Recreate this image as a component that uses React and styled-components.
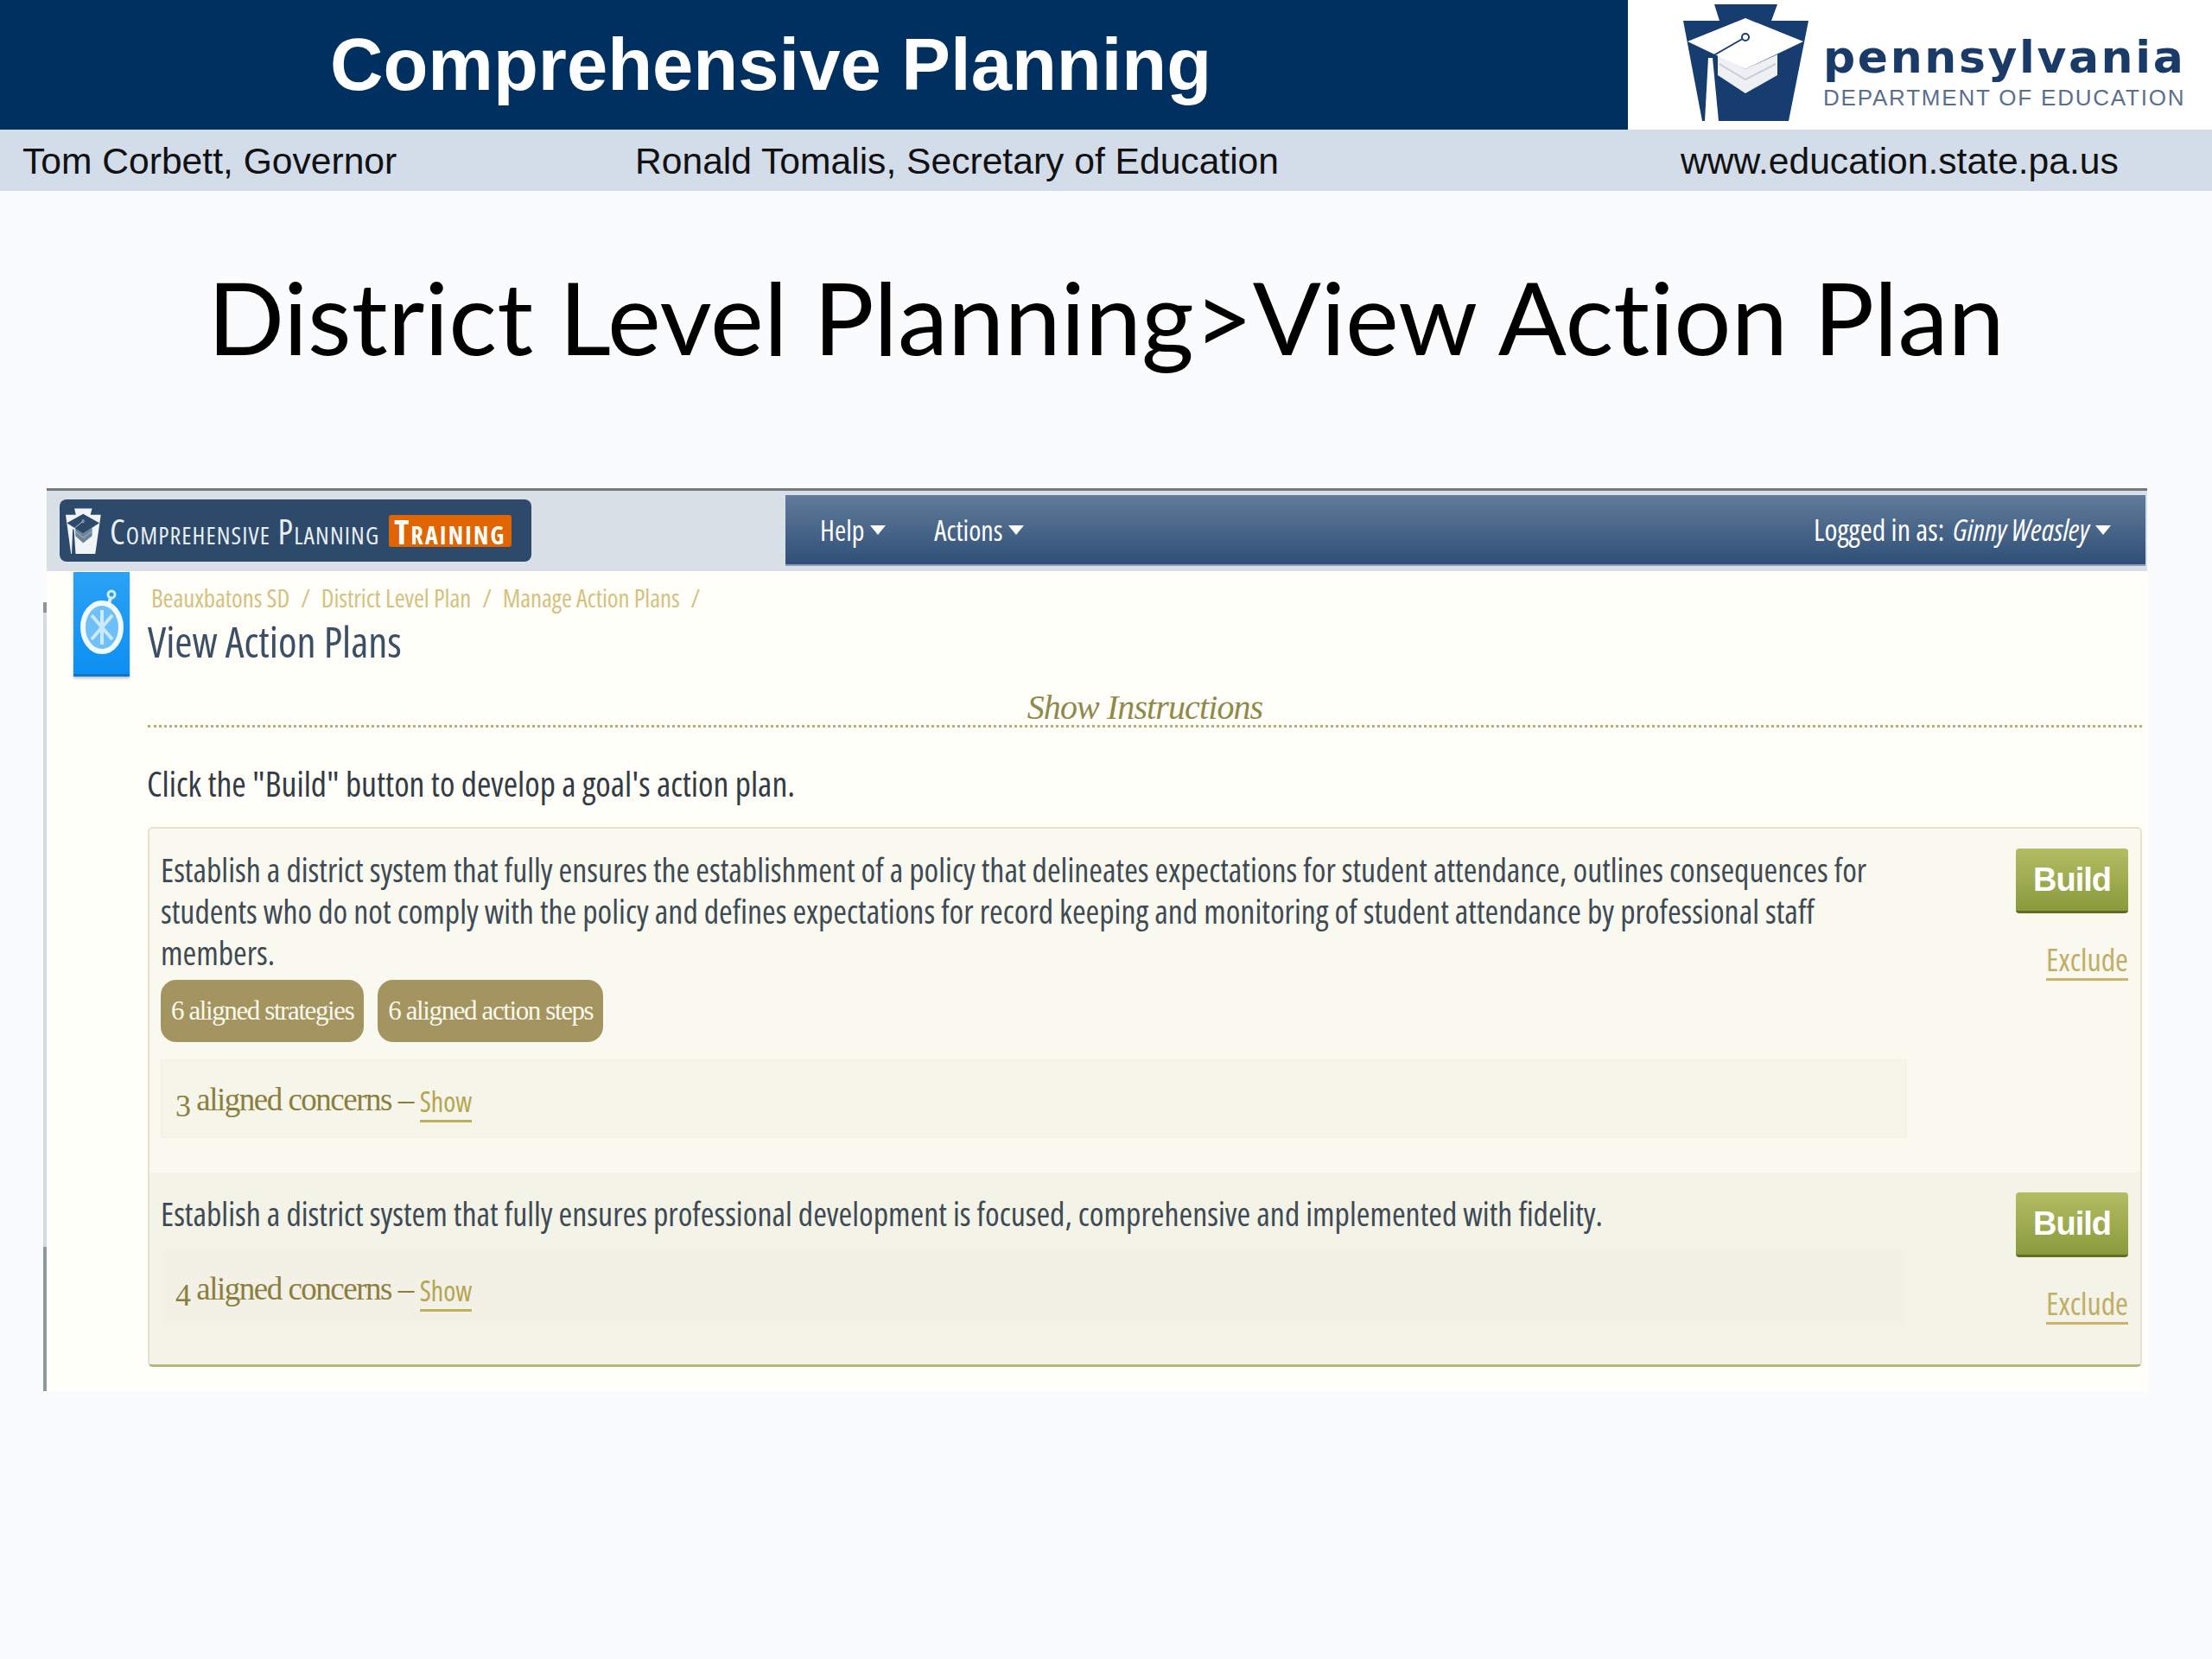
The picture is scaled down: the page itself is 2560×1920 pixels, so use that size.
import styled, { createGlobalStyle } from "styled-components";

const GlobalStyle = createGlobalStyle`
  html, body {
    margin: 0;
    padding: 0;
    background: #fafbfd;
  }
  * {
    box-sizing: border-box;
  }
`;

const condensed = `"Open Sans", "Liberation Sans", sans-serif`;
const bookSerif = `"Liberation Serif", "DejaVu Serif", serif`;

const Page = styled.div`
  width: 2560px;
  height: 1920px;
  overflow: hidden;
  background: #fafbfd;
`;

const Banner = styled.header`
  display: flex;
  height: 150px;
`;

const BannerTitle = styled.div`
  flex: none;
  width: 1884px;
  padding-left: 382px;
  display: flex;
  align-items: center;
  background: #00305f;
  color: #fff;
  font: bold 85px "Liberation Sans", Arial, sans-serif;
`;

const LogoArea = styled.div`
  flex: 1;
  display: flex;
  gap: 16px;
  padding: 4px 0 0 64px;
  background: #fff;
`;

const LogoWords = styled.div`
  padding-top: 32px;
  display: flex;
  flex-direction: column;
`;

const LogoState = styled.div`
  font: bold 52px/60px "DejaVu Sans", sans-serif;
  letter-spacing: 2.6px;
  color: #1a3a68;
`;

const LogoDept = styled.div`
  margin-top: 3px;
  font: 26px/28px "Liberation Sans", sans-serif;
  letter-spacing: 1.8px;
  color: #5a6f8e;
`;

const InfoBar = styled.div`
  display: flex;
  align-items: center;
  height: 71px;
  padding: 2px 0 0 26px;
  background: #d3dce9;
  color: #111;
  font: 42.6px "Liberation Sans", Arial, sans-serif;
`;

const InfoItem = styled.div`
  width: ${(p) => p.$width}px;
  white-space: nowrap;
`;

const SlideTitle = styled.h1`
  margin: 0;
  height: 344px;
  padding-top: 69px;
  text-align: center;
  font: 400 117px/152px Lato, "Open Sans", sans-serif;
  font-variant-ligatures: none;
  color: #000;
  white-space: nowrap;
`;

const Shot = styled.section`
  width: 2435px;
  margin-left: 50px;
`;

const TopBand = styled.div`
  margin-left: 4px;
  height: 96px;
  display: flex;
  justify-content: space-between;
  border-top: 3px solid #74797f;
  padding: 5px 2px 0 15px;
  background: #d8dfe6;
`;

const Brand = styled.div`
  flex: none;
  width: 546px;
  height: 72px;
  margin-top: 5px;
  display: flex;
  align-items: center;
  gap: 10px;
  padding-left: 7px;
  border-radius: 8px;
  background: #2d4a6b;
  color: #e8eef4;
  font: 400 40px ${condensed};
  font-stretch: 75%;
  font-variant: small-caps;
  letter-spacing: 1.1px;
  white-space: nowrap;

  svg {
    flex: none;
  }
`;

const TrainingBadge = styled.span`
  height: 37px;
  margin-left: 1px;
  padding: 0 6px;
  display: flex;
  align-items: center;
  border-radius: 3px;
  background: #e06400;
  color: #fff;
  font-weight: 700;
  letter-spacing: 2.2px;
`;

const NavBar = styled.nav`
  width: 1574px;
  height: 82px;
  display: flex;
  align-items: center;
  gap: 56px;
  padding: 0 40px;
  background: linear-gradient(#617c9b, #2f4f76);
  border-bottom: 2px solid #8a9cb0;
  color: #fff;
  font: 400 32px ${condensed};
  font-stretch: 75%;
`;

const NavItem = styled.span`
  display: flex;
  align-items: center;
  gap: 7px;
  white-space: nowrap;
  margin-left: ${(p) => (p.$right ? "auto" : "0")};
  font-size: ${(p) => (p.$right ? "34px" : "32px")};
`;

const Caret = styled.i`
  width: 0;
  height: 0;
  border-left: 9px solid transparent;
  border-right: 9px solid transparent;
  border-top: 11px solid #fff;
`;

const UserName = styled.em`
  margin-left: 3px;
`;

const ShotBody = styled.div`
  display: flex;
  height: 949px;
`;

const Rail = styled.div`
  width: 4px;
  background: linear-gradient(
    to bottom,
    transparent 36px,
    #8f949a 36px,
    #8f949a 48px,
    #d2dae3 48px,
    #d2dae3 782px,
    #8d98a5 782px
  );
`;

const Content = styled.div`
  flex: 1;
  display: flex;
  padding: 1px 6px 0 31px;
  background: #fffef9;
`;

const Tile = styled.div`
  width: 65px;
  height: 121px;
  flex: none;
  padding-top: 20px;
  display: flex;
  justify-content: center;
  background: linear-gradient(#2aa2f6, #0d8ff2);
  border-bottom: 3px solid #0a78d0;
  box-shadow: 0 2px 3px rgba(0, 0, 0, 0.25);
`;

const Main = styled.main`
  flex: 1;
  margin-left: 21px;
`;

const Crumbs = styled.div`
  display: flex;
  gap: 13px;
  padding: 13px 0 0 4px;
  font: 400 29px/34px ${condensed};
  font-stretch: 75%;
  letter-spacing: -0.1px;
  color: #d4c27e;
`;

const PageTitle = styled.h2`
  margin: 5px 0 0;
  font: 400 49px/56px ${condensed};
  font-stretch: 75%;
  color: #3b4f66;
`;

const InstructionsBar = styled.div`
  height: 72px;
  padding-top: 30px;
  text-align: center;
  border-bottom: 3px dotted #b6b077;
  font: italic 40px/38px ${bookSerif};
  letter-spacing: -0.9px;
  color: #8f8a4a;
`;

const Lead = styled.p`
  margin: 43px 0 0 -1px;
  font: 400 39.7px/44px ${condensed};
  font-stretch: 75%;
  color: #333c45;
`;

const Card = styled.div`
  margin-top: 28px;
  height: 625px;
  border: 2px solid #e2e2ce;
  border-bottom: 3px solid #b2b87d;
  border-radius: 6px;
  overflow: hidden;
`;

const Row = styled.div`
  height: ${(p) => p.$height}px;
  padding: 23px 14px 0 13px;
  display: flex;
  justify-content: space-between;
  background: ${(p) => p.$bg};
`;

const RowMain = styled.div`
  width: 2021px;
`;

const Goal = styled.p`
  margin: 0;
  max-width: 2000px;
  font: 400 37.9px/48px ${condensed};
  font-stretch: 75%;
  color: #3f4a55;
`;

const Pills = styled.div`
  display: flex;
  gap: 16px;
  margin-top: 8px;
`;

const Pill = styled.span`
  height: 72px;
  padding: 0 12px;
  display: flex;
  align-items: center;
  border-radius: 18px;
  background: #a39460;
  color: #fbf8ec;
  font: 31px ${bookSerif};
  letter-spacing: -1.4px;
`;

const Concerns = styled.div`
  height: 91px;
  margin-top: ${(p) => p.$top}px;
  padding: 8px 0 0 15px;
  display: flex;
  align-items: center;
  gap: 8px;
  border: 2px solid #f2f2e6;
  background: ${(p) => p.$bg};
  color: #8b7f3f;
  font: 37px ${bookSerif};
  letter-spacing: -1.5px;
`;

const OldNum = styled.span`
  font-size: 36px;
  vertical-align: -7px;
`;

const ShowLink = styled.a`
  font: 400 32px ${condensed};
  font-stretch: 75%;
  letter-spacing: 0;
  color: #b5a552;
  border-bottom: 3px solid #c0b05c;
`;

const Actions = styled.div`
  width: 130px;
  display: flex;
  flex-direction: column;
  align-items: flex-end;
`;

const BuildButton = styled.button`
  width: 130px;
  height: 75px;
  border: 0;
  border-bottom: 3px solid #5f6f22;
  border-radius: 4px;
  background: linear-gradient(#b3bd63, #8a9a3c);
  color: #fff;
  font: bold 38px "Liberation Sans", sans-serif;
  letter-spacing: -1px;
`;

const ExcludeLink = styled.a`
  margin-top: 32px;
  font: 400 36px/43px ${condensed};
  font-stretch: 75%;
  color: #c2ad68;
  border-bottom: 3px solid #cdb36a;
`;

// keystone with the mortar board, big one in the banner and a small white one in the nav
const Keystone = ({ width, height, stone, cap, fold }) => (
  <svg width={width} height={height} viewBox="0 0 146 136" preserveAspectRatio="none">
    <path d="M36 1H109L102 20H145L122 136H22L0 20H42Z" fill={stone} />
    <path d="M40 59V83L72 104L109 83V59L72 76Z" fill={fold} />
    <path d="M42 70L72 88L107 70" fill="none" stroke="#c9ced6" strokeWidth="2" />
    <path d="M5 44L72 17L139 44L72 76Z" fill={cap} />
    <path d="M72 39L32 62" stroke={stone} strokeWidth="2" fill="none" />
    <circle cx="72" cy="39" r="4" fill={cap} stroke={stone} strokeWidth="2" />
    <path d="M29 63H34L41 136H25Z" fill={cap} />
  </svg>
);

const CompassIcon = () => (
  <svg width="52" height="76" viewBox="0 0 52 76">
    <circle cx="37" cy="6" r="4" fill="none" stroke="#d8eeff" strokeWidth="3" />
    <path d="M36 10L34 16" stroke="#d8eeff" strokeWidth="4" />
    <ellipse cx="26" cy="44" rx="22" ry="28" fill="#6fc0f8" stroke="#f2f9ff" strokeWidth="6" />
    <path d="M14 58L38 30M14 30L38 58M26 24V64" stroke="#cde9fd" strokeWidth="4" />
  </svg>
);

const App = () => (
  <Page>
    <GlobalStyle />
    <Banner>
      <BannerTitle>Comprehensive Planning</BannerTitle>
      <LogoArea>
        <Keystone width={146} height={136} stone="#173c70" cap="#fff" fold="#eef0f4" />
        <LogoWords>
          <LogoState>pennsylvania</LogoState>
          <LogoDept>DEPARTMENT OF EDUCATION</LogoDept>
        </LogoWords>
      </LogoArea>
    </Banner>
    <InfoBar>
      <InfoItem $width={709}>Tom Corbett, Governor</InfoItem>
      <InfoItem $width={1210}>Ronald Tomalis, Secretary of Education</InfoItem>
      <InfoItem $width={520}>www.education.state.pa.us</InfoItem>
    </InfoBar>
    <SlideTitle>District Level Planning&gt;View Action Plan</SlideTitle>
    <Shot>
      <TopBand>
        <Brand>
          <Keystone width={41} height={53} stone="#f2f5f8" cap="#2d4a6b" fold="#6d839b" />
          Comprehensive Planning
          <TrainingBadge>Training</TrainingBadge>
        </Brand>
        <NavBar>
          <NavItem>
            Help <Caret />
          </NavItem>
          <NavItem>
            Actions <Caret />
          </NavItem>
          <NavItem $right>
            Logged in as: <UserName>Ginny Weasley</UserName> <Caret />
          </NavItem>
        </NavBar>
      </TopBand>
      <ShotBody>
        <Rail />
        <Content>
          <Tile>
            <CompassIcon />
          </Tile>
          <Main>
            <Crumbs>
              <span>Beauxbatons SD</span>
              <span>/</span>
              <span>District Level Plan</span>
              <span>/</span>
              <span>Manage Action Plans</span>
              <span>/</span>
            </Crumbs>
            <PageTitle>View Action Plans</PageTitle>
            <InstructionsBar>Show Instructions</InstructionsBar>
            <Lead>Click the "Build" button to develop a goal's action plan.</Lead>
            <Card>
              <Row $height={398} $bg="#f9f9f0">
                <RowMain>
                  <Goal>
                    Establish a district system that fully ensures the establishment of a policy that
                    delineates expectations for student attendance, outlines consequences for students who
                    do not comply with the policy and defines expectations for record keeping and monitoring
                    of student attendance by professional staff members.
                  </Goal>
                  <Pills>
                    <Pill>6 aligned strategies</Pill>
                    <Pill>6 aligned action steps</Pill>
                  </Pills>
                  <Concerns $top={20} $bg="#f6f5ea">
                    <span>
                      <OldNum>3</OldNum> aligned concerns –
                    </span>
                    <ShowLink>Show</ShowLink>
                  </Concerns>
                </RowMain>
                <Actions>
                  <BuildButton>Build</BuildButton>
                  <ExcludeLink>Exclude</ExcludeLink>
                </Actions>
              </Row>
              <Row $height={224} $bg="#f3f3e7">
                <RowMain>
                  <Goal>
                    Establish a district system that fully ensures professional development is focused,
                    comprehensive and implemented with fidelity.
                  </Goal>
                  <Concerns $top={17} $bg="#f3f1e6">
                    <span>
                      <OldNum>4</OldNum> aligned concerns –
                    </span>
                    <ShowLink>Show</ShowLink>
                  </Concerns>
                </RowMain>
                <Actions>
                  <BuildButton>Build</BuildButton>
                  <ExcludeLink>Exclude</ExcludeLink>
                </Actions>
              </Row>
            </Card>
          </Main>
        </Content>
      </ShotBody>
    </Shot>
  </Page>
);

export default App;
